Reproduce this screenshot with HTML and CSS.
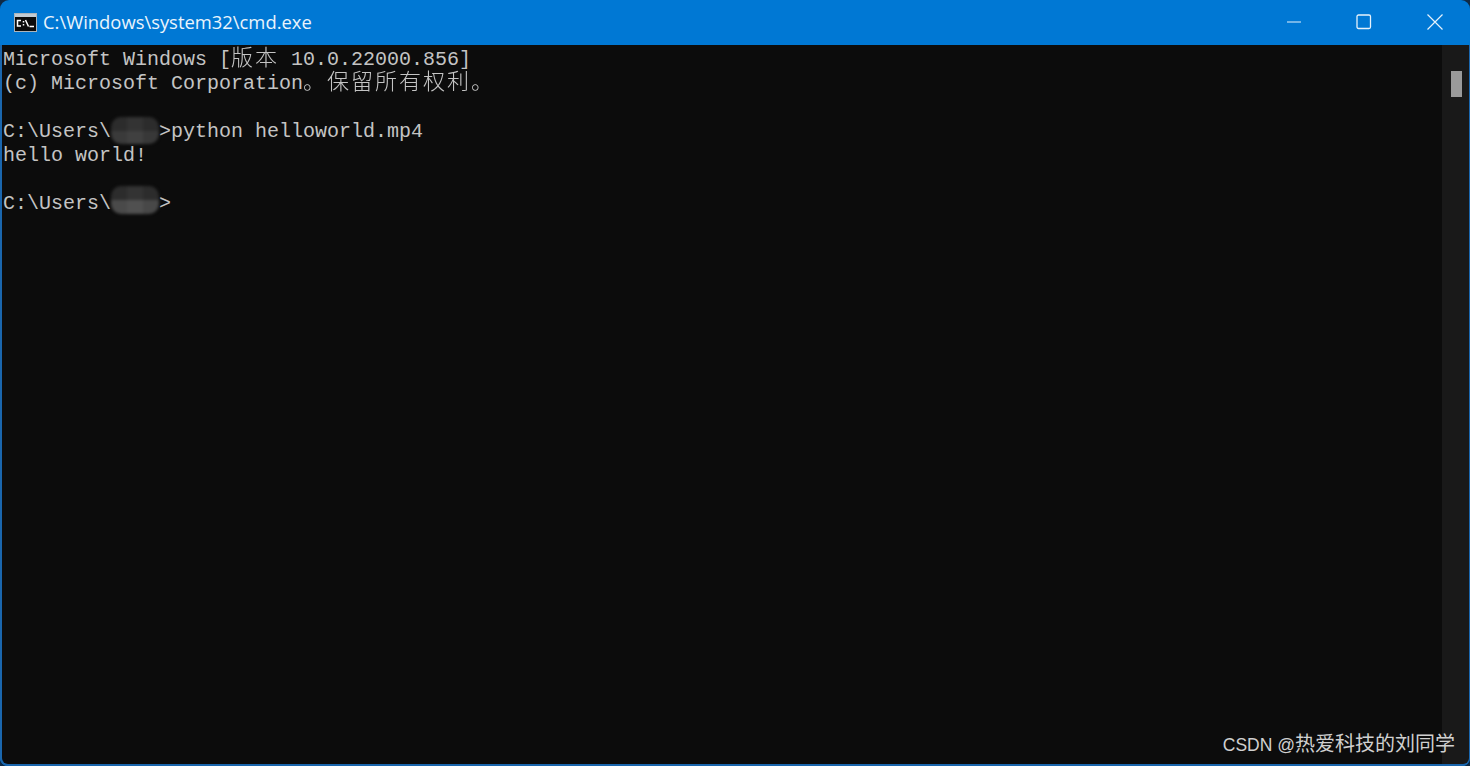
FILE: index.html
```html
<!DOCTYPE html>
<html lang="zh">
<head>
<meta charset="utf-8">
<title>cmd.exe</title>
<link rel="stylesheet" href="styles.css">
</head>
<body>
<div class="window">
  <header class="titlebar">
    <svg class="app-icon" width="23" height="19" viewBox="0 0 23 19">
      <rect x="0.5" y="0.5" width="22" height="18" fill="#0c0c0c" stroke="#aab4bc"/>
      <rect x="1" y="1" width="21" height="3" fill="#c3ccd3"/>
      <path d="M7 7.5H3.5V13H7M9.5 8V9.5M9.5 11V12.5M11.5 7L14.5 13.5M15.5 13.5H20" fill="none" stroke="#fff" stroke-width="1.5"/>
    </svg>
    <span class="title">C:\Windows\system32\cmd.exe</span>
    <div class="controls">
      <svg class="ctl" width="16" height="16" viewBox="0 0 16 16"><path d="M2 8H16" stroke="#e6f2fb" stroke-width="1.2"/></svg>
      <svg class="ctl" width="16" height="16" viewBox="0 0 16 16"><rect x="1" y="1" width="13.5" height="13.5" rx="1.5" fill="none" stroke="#e6f2fb" stroke-width="1.3"/></svg>
      <svg class="ctl" width="16" height="16" viewBox="0 0 16 16"><path d="M0.5 0.5L15.5 15.5M15.5 0.5L0.5 15.5" stroke="#e6f2fb" stroke-width="1.2"/></svg>
    </div>
  </header>
  <div class="body">
    <main class="console">
      <div class="line">Microsoft Windows [<span class="cjk">版本</span> 10.0.22000.856]</div>
      <div class="line">(c) Microsoft Corporation<span class="cjk">。保留所有权利。</span></div>
      <div class="line"></div>
      <div class="line">C:\Users\<span class="mosaic"><i></i><i></i><i></i><i></i><i></i><i></i></span>&gt;python helloworld.mp4</div>
      <div class="line">hello world!</div>
      <div class="line"></div>
      <div class="line">C:\Users\<span class="mosaic mosaic-light"><i></i><i></i><i></i><i></i><i></i><i></i></span>&gt;</div>
    </main>
    <aside class="scrollbar"><div class="thumb"></div></aside>
  </div>
  <div class="watermark"><span class="wm-latin">CSDN @</span>热爱科技的刘同学</div>
</div>
</body>
</html>
```
FILE: styles.css
```css
* { box-sizing: border-box; }
html, body { margin: 0; height: 100%; background: #0f2a45; overflow: hidden; }
.window {
  position: relative;
  height: 766px;
  display: flex;
  flex-direction: column;
  background: #0078d4;
  border-radius: 9px 9px 8px 8px;
  overflow: hidden;
}
.titlebar {
  height: 45px;
  flex: none;
  display: flex;
  align-items: center;
  padding: 0 0 1px 14px;
  color: #eaf4fc;
}
.app-icon { flex: none; margin-right: 6px; }
.title {
  font: 18.4px/24px "Open Sans", "Noto Sans", sans-serif;
}
.controls {
  margin-left: auto;
  display: flex;
  gap: 55px;
  padding-right: 27px;
}
.ctl { display: block; }
.body {
  flex: 1;
  display: flex;
  min-height: 0;
  padding: 0 1px 2px 2px;
  background: #1a66ad;
}
.console {
  flex: 1;
  background: #0c0c0c;
  padding-top: 3px;
  padding-left: 1px;
  color: #c4c4c4;
  border-bottom-left-radius: 6px;
  font: 20px/24px "Liberation Mono", "Noto Sans CJK SC", monospace;
}
.line { height: 24px; white-space: pre; }
.cjk {
  display: inline-block;
  will-change: transform;
  font-family: "Noto Sans CJK SC", sans-serif;
  font-size: 22px;
  font-weight: 300;
  letter-spacing: 2px;
  line-height: 0;
}
.mosaic {
  display: inline-grid;
  grid-template-columns: repeat(3, 1fr);
  grid-template-rows: repeat(2, 1fr);
  width: 48px;
  height: 27px;
  margin-top: -3px;
  vertical-align: top;
  filter: blur(1.5px);
  border-radius: 10px;
  overflow: hidden;
}
.mosaic i { background: #2c2c2c; }
.mosaic i:nth-child(2) { background: #333333; }
.mosaic i:nth-child(4) { background: #3a3a3a; }
.mosaic i:nth-child(5) { background: #404040; }
.mosaic i:nth-child(6) { background: #383838; }
.mosaic-light { height: 28px; margin-top: -6px; }
.mosaic-light i:nth-child(4) { background: #4a4a4a; }
.mosaic-light i:nth-child(5) { background: #505050; }
.mosaic-light i:nth-child(6) { background: #484848; }
.scrollbar {
  width: 27px;
  flex: none;
  background: #191919;
  padding: 26px 0 0 9px;
  border-bottom-right-radius: 6px;
}
.thumb { width: 11px; height: 26px; background: #9a9a9a; }
.watermark {
  position: absolute;
  right: 15px;
  bottom: 8px;
  color: #d0d0d0;
  font: 20px/26px "Liberation Sans", "Noto Sans CJK SC", sans-serif;
}
.wm-latin { font-size: 17.5px; }
```
